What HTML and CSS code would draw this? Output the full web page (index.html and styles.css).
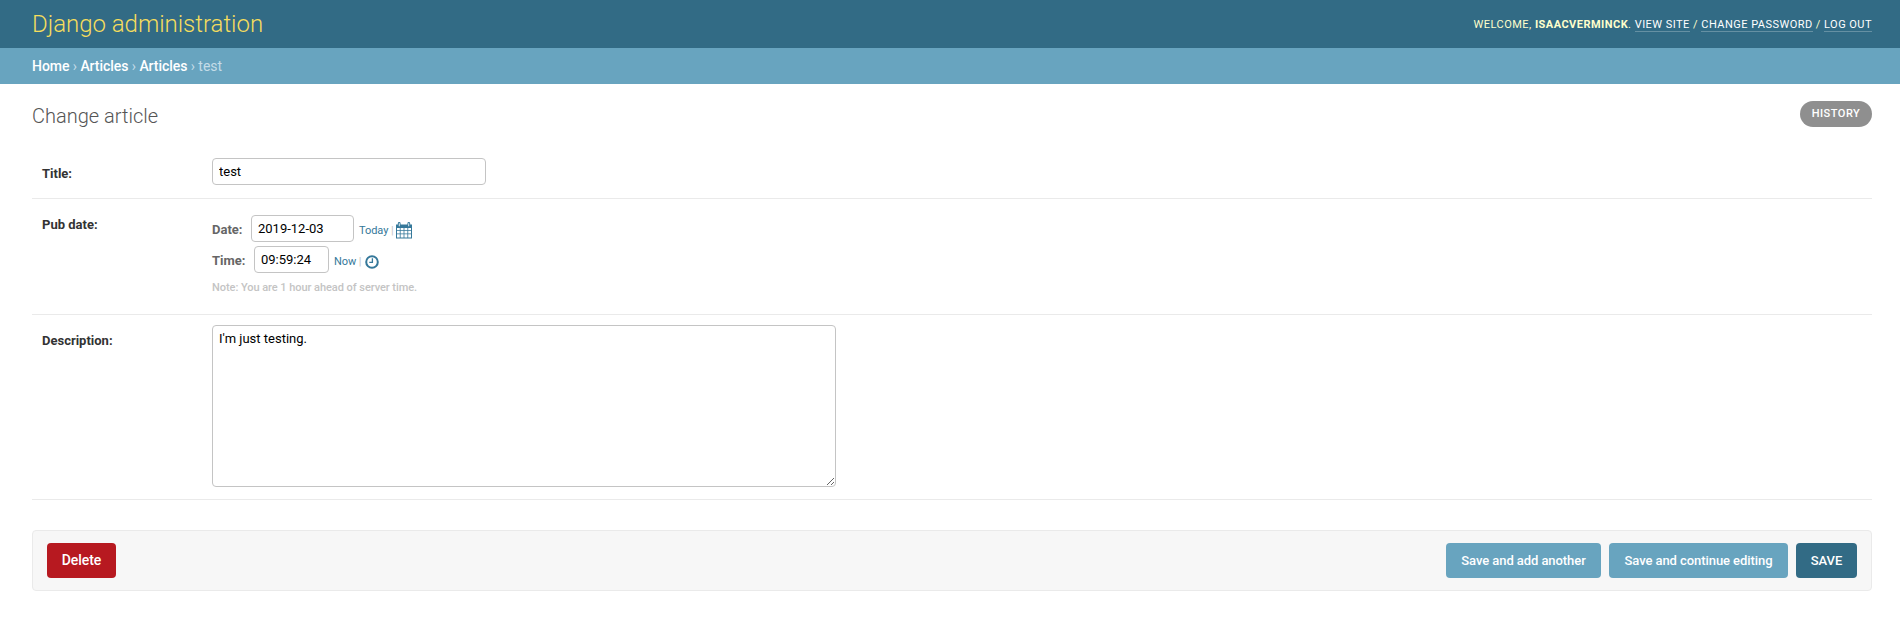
FILE: index.html
```html
<!DOCTYPE html>
<html lang="en">
<head>
<meta charset="utf-8">
<title>Change article | Django administration</title>
<link rel="stylesheet" href="styles.css">
</head>
<body>
<header class="header">
  <div class="branding">Django administration</div>
  <div class="user-tools">Welcome, <strong>isaacverminck</strong>. <a>View site</a> / <a>Change password</a> / <a>Log out</a></div>
</header>
<nav class="breadcrumbs"><a>Home</a> › <a>Articles</a> › <a>Articles</a> › test</nav>
<main class="content">
  <div class="title-bar">
    <h1>Change article</h1>
    <a class="history">History</a>
  </div>
  <form>
    <div class="row row-title">
      <label class="field-label">Title:</label>
      <input class="field title-input" type="text" value="test">
    </div>
    <div class="row row-date">
      <label class="field-label">Pub date:</label>
      <div class="datetime">
        <div class="line">
          <span class="sub-label date-label">Date:</span>
          <input class="field date-input" type="text" value="2019-12-03">
          <span class="shortcuts"><a>Today</a><i>|</i>
            <svg class="calendar" width="16" height="17" viewBox="0 0 16 17"><path fill="#35789a" fill-rule="evenodd" d="M0 2.5h1.8V1.4Q1.8 0 3.2 0t1.4 1.4v1.1h6.8V1.4Q11.4 0 12.8 0t1.4 1.4v1.1H16V16.5H0zM2.8 1.2v3h.9v-3zm9.5 0v3h.9v-3zM1 6v2h2.8V6zm3.6 0v2h3V6zm3.8 0v2h3V6zm3.8 0v2H15V6zM1 8.8v2.7h2.8V8.8zm3.6 0v2.7h3V8.8zm3.8 0v2.7h3V8.8zm3.8 0v2.7H15V8.8zM1 12.3v3.2h2.8v-3.2zm3.6 0v3.2h3v-3.2zm3.8 0v3.2h3v-3.2zm3.8 0v3.2H15v-3.2z"/></svg>
          </span>
        </div>
        <div class="line">
          <span class="sub-label time-label">Time:</span>
          <input class="field time-input" type="text" value="09:59:24">
          <span class="shortcuts"><a>Now</a><i>|</i>
            <svg class="clock" width="14" height="14" viewBox="0 0 14 14" fill="none" stroke="#35789a"><circle cx="7" cy="7" r="5.8" stroke-width="2"/><path d="M7.4 3.3v4.1H4.3" stroke-width="1.3"/></svg>
          </span>
        </div>
        <div class="note">Note: You are 1 hour ahead of server time.</div>
      </div>
    </div>
    <div class="row row-description">
      <label class="field-label">Description:</label>
      <textarea class="field description">I'm just testing.</textarea>
    </div>
    <div class="submit-row">
      <a class="button delete">Delete</a>
      <button type="button" class="button another">Save and add another</button>
      <button type="button" class="button continue">Save and continue editing</button>
      <button type="button" class="button save">SAVE</button>
    </div>
  </form>
</main>
</body>
</html>
```
FILE: styles.css
```css
* { box-sizing: border-box; }
body { margin: 0; background: #fff; color: #333; font-family: Roboto, sans-serif; font-size: 14px; }
.header { display: flex; justify-content: space-between; align-items: center; height: 48px; padding: 0 28px 0 32px; background: #326b85; color: #ffc; }
.branding { font-size: 24px; font-weight: 300; color: #f5dd5d; letter-spacing: -.02px; }
.user-tools { font-size: 11px; letter-spacing: .47px; text-transform: uppercase; font-weight: 400; line-height: 13px; }
.user-tools strong { font-weight: 700; }
.user-tools a { color: #fff; border-bottom: 1px solid rgba(255, 255, 255, .25); font-weight: 400; }
.breadcrumbs { height: 36px; padding: 0 32px; line-height: 36px; background: #68a4bf; color: #c4dce8; letter-spacing: -.05px; }
.breadcrumbs a { color: #fff; font-weight: 500; }
.content { padding: 0 28px 0 32px; }
.title-bar { display: flex; justify-content: space-between; height: 64px; }
h1 { margin: 20px 0 0; font-size: 20px; line-height: 24px; font-weight: 300; color: #555; }
.history { width: 72px; height: 26px; margin-top: 17px; border-radius: 13px; background: #8f8f8f; color: #fff; font-size: 11px; font-weight: 500; letter-spacing: .5px; line-height: 25px; text-align: center; text-transform: uppercase; }
.row { display: flex; align-items: flex-start; padding: 10px; border-bottom: 1px solid #eaeaea; }
.row-title { height: 51px; }
.row-date { height: 116px; padding-top: 16px; }
.row-description { height: 185px; }
.field-label { width: 170px; padding-top: 8px; font-size: 13px; line-height: 16px; font-weight: 700; }
.row-date .field-label { padding-top: 2px; }
.field { display: block; height: 27px; margin: 0; padding: 0 6px 1px; border: 1px solid #c4c4c4; border-radius: 4px; background: #fff; color: #000; font: 400 13px/16px Roboto, sans-serif; }
.title-input { width: 274px; }
.date-input { width: 103px; }
.time-input { width: 75px; }
.line { display: flex; height: 31px; align-items: flex-start; }
.sub-label { color: #666; font-size: 13px; line-height: 16px; font-weight: 700; padding-top: 7px; }
.date-label { width: 39px; }
.time-label { width: 42px; }
.shortcuts { display: flex; padding: 9px 0 0 5px; font-size: 11px; line-height: 13px; color: #c4c4c4; letter-spacing: -.05px; }
.shortcuts a { color: #35789a; }
.shortcuts i { font-style: normal; margin: 0 2.5px; }
.calendar { margin-top: -2px; }
.clock { margin: 0 0 0 1px; }
.note { padding-top: 4px; font-size: 11px; line-height: 14px; font-weight: 500; letter-spacing: -.05px; color: #c4c4c4; }
.description { width: 624px; height: 162px; padding: 5px 6px; resize: both; }
.submit-row { display: flex; gap: 8px; height: 61px; margin-top: 30px; padding: 12px 14px; border: 1px solid #eaeaea; border-radius: 4px; background: #f7f7f7; }
.button { height: 35px; padding: 0; border: 0; border-radius: 4px; color: #fff; background: #68a4bf; font: 500 13px/35px Roboto, sans-serif; letter-spacing: -.07px; text-align: center; }
.delete { width: 69px; margin-right: auto; background: #b71920; font-size: 14px; }
.another { width: 155px; }
.continue { width: 179px; }
.save { width: 61px; background: #326b85; }
```
